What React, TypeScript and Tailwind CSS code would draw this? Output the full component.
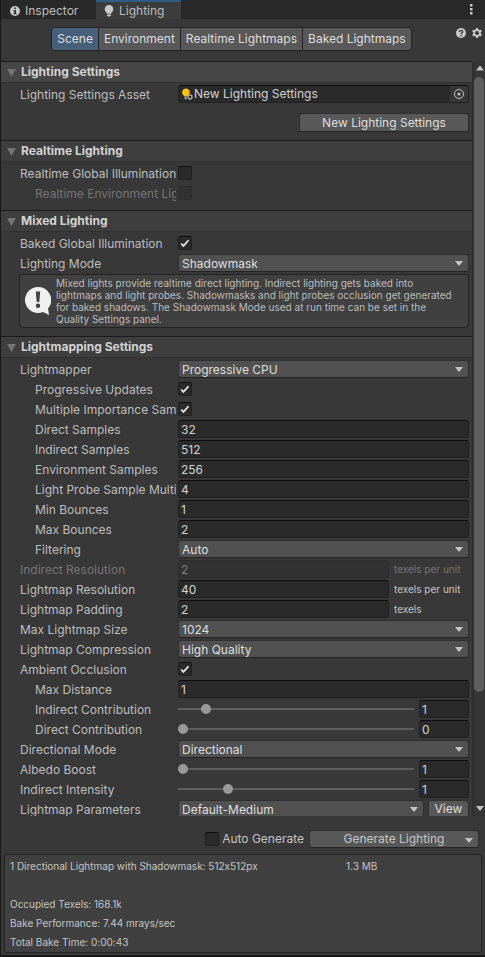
import { useState, type ReactNode } from "react";

const fieldClass =
  "h-[18px] min-w-0 rounded-[3px] border border-[#212121] border-t-[#0d0d0d] bg-[#2a2a2a] px-[2px] text-[12px] leading-[16px] text-[#d2d2d2] outline-none disabled:border-[#2d2d2d] disabled:bg-[#323232] disabled:text-[#7e7e7e]";

const buttonClass =
  "rounded-[3px] border border-[#303030] border-b-[#242424] bg-[#585858] text-[12px]";

const idOf = (label: string) => label.toLowerCase().replace(/\s+/g, "-");

function DownArrow({ className }: { className: string }) {
  return (
    <svg viewBox="0 0 8 5" className={className} aria-hidden="true">
      <path d="M0 0h8L4.500 4.500h-1z" fill="#c4c4c4" />
    </svg>
  );
}

function Section({ title, highlight, children }: { title: string; highlight?: boolean; children: ReactNode }) {
  return (
    <section className="pb-2">
      <h2
        className={`flex h-[22px] items-center border-t border-b border-t-[#1a1a1a] border-b-[#303030] pl-[6px] text-[12px] font-bold text-[#d2d2d2] ${
          highlight ? "bg-[#464646]" : "bg-[#3e3e3e]"
        }`}
      >
        <svg viewBox="0 0 9 8" className="mt-px mr-[5px] h-2 w-[9px]" aria-hidden="true">
          <path d="M0 0h9L4.500 8z" fill="#747474" />
        </svg>
        {title}
      </h2>
      <div className="flex flex-col gap-[2px] pt-[2px] pr-[3px]">{children}</div>
    </section>
  );
}

function Row({ label, indent, muted, children }: { label: string; indent?: boolean; muted?: boolean; children: ReactNode }) {
  return (
    <div className="flex h-[18px] items-center">
      <label
        htmlFor={idOf(label)}
        className={`mr-[2px] w-[175px] shrink-0 overflow-hidden pt-px leading-[17px] whitespace-nowrap ${indent ? "pl-[34px]" : "pl-[19px]"} ${
          muted ? "text-[#757575]" : "text-[#bdbdbd]"
        }`}
      >
        {label}
      </label>
      {children}
    </div>
  );
}

function CheckBox({ id, checked: initial = false, disabled }: { id: string; checked?: boolean; disabled?: boolean }) {
  const [checked, setChecked] = useState(initial);
  return (
    <span className="relative block size-[14px] shrink-0">
      <input
        id={id}
        type="checkbox"
        checked={checked}
        disabled={disabled}
        onChange={(e) => setChecked(e.target.checked)}
        className="block size-[14px] appearance-none rounded-[2px] border border-[#212121] border-t-[#0d0d0d] bg-[#2a2a2a] disabled:border-[#2c2c2c] disabled:bg-[#323232]"
      />
      {checked && (
        <svg viewBox="0 0 14 14" className="pointer-events-none absolute inset-0 size-[14px]" aria-hidden="true">
          <path d="M3.200 7.600l2.300 2.300 5-5.700" fill="none" stroke="#e8e8e8" strokeWidth="1.700" />
        </svg>
      )}
    </span>
  );
}

function CheckRow({ label, checked, disabled, indent }: { label: string; checked?: boolean; disabled?: boolean; indent?: boolean }) {
  return (
    <Row label={label} indent={indent} muted={disabled}>
      <CheckBox id={idOf(label)} checked={checked} disabled={disabled} />
    </Row>
  );
}

function Select({ id, value }: { id: string; value: string }) {
  return (
    <span className="relative flex min-w-0 flex-1">
      <select
        id={id}
        className="h-[18px] w-full appearance-none rounded-[3px] border border-[#303030] border-b-[#242424] bg-[#515151] px-[3px] text-[12px] leading-[15px] text-[#dedede] outline-none"
      >
        <option>{value}</option>
      </select>
      <DownArrow className="pointer-events-none absolute top-[7px] right-[6px] h-[5px] w-2" />
    </span>
  );
}

function SelectRow({ label, value, indent }: { label: string; value: string; indent?: boolean }) {
  return (
    <Row label={label} indent={indent}>
      <Select id={idOf(label)} value={value} />
    </Row>
  );
}

function NumberRow({ label, value, indent, disabled, unit }: { label: string; value: string; indent?: boolean; disabled?: boolean; unit?: string }) {
  return (
    <Row label={label} indent={indent} muted={disabled}>
      <input id={idOf(label)} type="text" defaultValue={value} disabled={disabled} className={`${fieldClass} flex-1`} />
      {unit && (
        <span className={`w-20 shrink-0 pl-[5px] text-[10px] whitespace-nowrap ${disabled ? "text-[#757575]" : "text-[#c4c4c4]"}`}>{unit}</span>
      )}
    </Row>
  );
}

function SliderRow({ label, value, min, max, indent }: { label: string; value: number; min: number; max: number; indent?: boolean }) {
  const [current, setCurrent] = useState(value);
  return (
    <Row label={label} indent={indent}>
      <input
        id={idOf(label)}
        type="range"
        min={min}
        max={max}
        step="any"
        value={current}
        onChange={(e) => setCurrent(Number(e.target.value))}
        className="mr-[5px] h-[18px] min-w-0 flex-1 appearance-none bg-transparent [&::-webkit-slider-runnable-track]:h-[2px] [&::-webkit-slider-runnable-track]:bg-[#5e5e5e] [&::-webkit-slider-thumb]:-mt-1 [&::-webkit-slider-thumb]:size-[10px] [&::-webkit-slider-thumb]:appearance-none [&::-webkit-slider-thumb]:rounded-full [&::-webkit-slider-thumb]:bg-[#999999]"
      />
      <input
        type="text"
        aria-label={`${label} value`}
        value={current}
        onChange={(e) => setCurrent(Number(e.target.value) || 0)}
        className={`${fieldClass} w-[50px]`}
      />
    </Row>
  );
}

function Bulb({ className }: { className: string }) {
  return (
    <svg viewBox="0 0 10 12" className={className} aria-hidden="true">
      <path d="M5 0a4.200 4.200 0 0 1 4.300 4.200c0 1.600-.9 2.500-1.700 3.400-.3.400-.4.700-.4 1.100H2.800c0-.4-.1-.7-.4-1.100C1.600 6.700.7 5.800.7 4.200A4.200 4.200 0 0 1 5 0z" fill="#c8c8c8" />
      <path d="M3 9.500h4v.8L6 11.600H4L3 10.300z" fill="#c8c8c8" />
    </svg>
  );
}

const views = ["Scene", "Environment", "Realtime Lightmaps", "Baked Lightmaps"];

export default function App() {
  const [view, setView] = useState("Scene");
  return (
    <div className="flex h-screen flex-col border-b-2 border-l border-b-[#191919] border-l-[#191919] bg-[#383838] font-['Inter','Liberation_Sans',sans-serif] text-[12px] text-[#c4c4c4] [font-feature-settings:'calt'_0]">
      <header className="flex h-[19px] shrink-0 bg-[#282828]">
        <div role="tablist" className="flex">
          <button role="tab" aria-selected={false} className="flex w-[95px] items-center gap-[5px] border-t-2 border-transparent pl-[9px] text-[#bdbdbd]">
            <svg viewBox="0 0 10 10" className="size-[10px]" aria-hidden="true">
              <circle cx="5" cy="5" r="5" fill="#c8c8c8" />
              <path d="M4.200 1.500h1.700v1.500H4.200zM3.500 4h2.400v3.200h.8v1H3.400v-1h.8V5h-.7z" fill="#282828" />
            </svg>
            Inspector
          </button>
          <button role="tab" aria-selected={true} className="flex w-[85px] items-center gap-[5px] border-t-2 border-[#2c5d87] bg-[#3c3c3c] pl-2 text-[#bdbdbd]">
            <Bulb className="h-3 w-[10px]" />
            Lighting
          </button>
        </div>
        <button aria-label="Window menu" className="mr-3 ml-auto">
          <svg viewBox="0 0 3 11" className="h-[11px] w-[3px]" aria-hidden="true">
            <path d="M0 0h2.500v2.500H0zM0 4h2.500v2.500H0zM0 8h2.500v2.500H0z" fill="#c8c8c8" />
          </svg>
        </button>
      </header>

      <nav className="flex h-[42px] shrink-0 items-start pt-2">
        <div className="flex flex-1 justify-center pl-[7px]">
          {views.map((name) => (
            <button
              key={name}
              aria-pressed={view === name}
              onClick={() => setView(name)}
              className={`-ml-px h-6 border border-[#242424] px-[5px] text-[12px] whitespace-nowrap text-[#dedede] first:rounded-l-[3px] last:rounded-r-[3px] ${
                view === name ? "bg-[#46607c]" : "bg-[#585858]"
              }`}
            >
              {name}
            </button>
          ))}
        </div>
        <div className="flex gap-[6px] pt-[1px] pr-[3px]">
          <button aria-label="Help">
            <svg viewBox="0 0 10 10" className="size-[10px]" aria-hidden="true">
              <circle cx="5" cy="5" r="5" fill="#c8c8c8" />
              <path d="M3.300 4c0-2.200 3.400-2.200 3.400-.2C6.700 5 5.100 4.900 5.100 6.200" fill="none" stroke="#383838" strokeWidth="1.300" />
              <path d="M4.400 7h1.400v1.300H4.400z" fill="#383838" />
            </svg>
          </button>
          <button aria-label="Settings">
            <svg viewBox="-5 -5 10 10" className="size-[10px]" aria-hidden="true">
              <circle r="2.900" fill="none" stroke="#c8c8c8" strokeWidth="1.900" />
              <path
                d="M-1-5h2v2h-2zM-1 3h2v2h-2zM3.800-3.400l1 1.800-1.700 1-1-1.800zM-3.800 3.400l-1-1.800 1.700-1 1 1.800zM4.800 1.600l-1 1.800-1.700-1 1-1.800zM-4.800-1.600l1-1.800 1.700 1-1 1.800z"
                fill="#c8c8c8"
              />
            </svg>
          </button>
        </div>
      </nav>

      <main className="flex min-h-0 flex-1">
        <div className="min-w-0 flex-1 overflow-y-auto [scrollbar-width:none]">
          <Section title="Lighting Settings" highlight>
            <Row label="Lighting Settings Asset">
              <div className="flex h-[18px] min-w-0 flex-1 items-center overflow-hidden rounded-[3px] border border-[#212121] border-t-[#0d0d0d] bg-[#2a2a2a] pl-[2px]">
                <svg viewBox="0 0 12 12" className="mr-px size-3 shrink-0" aria-hidden="true">
                  <path d="M5 .5a3.800 3.800 0 0 1 3.500 5.300L6.500 8.500h-3L1.800 6.500A3.800 3.800 0 0 1 5 .5z" fill="#ffc107" />
                  <path d="M3.200 9.300h2.300v2H4z" fill="#c4c4c4" />
                  <circle cx="9" cy="9" r="2" fill="none" stroke="#a8a8a8" strokeWidth="1.300" />
                </svg>
                <input
                  id="lighting-settings-asset"
                  type="text"
                  readOnly
                  value="New Lighting Settings"
                  className="h-4 min-w-0 flex-1 bg-transparent text-[12px] leading-4 text-[#d2d2d2] outline-none"
                />
                <button aria-label="Select asset" className="flex h-4 w-[18px] shrink-0 items-center justify-center bg-[#373737]">
                  <svg viewBox="0 0 10 10" className="size-[10px]" aria-hidden="true">
                    <circle cx="5" cy="5" r="4.500" fill="none" stroke="#c4c4c4" strokeWidth="1" />
                    <circle cx="5" cy="5" r="1.500" fill="#c4c4c4" />
                  </svg>
                </button>
              </div>
            </Row>
            <button className={`${buttonClass} mt-2 h-[19px] w-[170px] self-end leading-[17px] text-[#dedede]`}>New Lighting Settings</button>
          </Section>

          <Section title="Realtime Lighting">
            <CheckRow label="Realtime Global Illumination" />
            <CheckRow label="Realtime Environment Lighting" indent disabled />
          </Section>

          <Section title="Mixed Lighting">
            <CheckRow label="Baked Global Illumination" checked />
            <SelectRow label="Lighting Mode" value="Shadowmask" />
            <div className="ml-[18px] flex min-h-[54px] items-center rounded-[3px] border border-[#232323] bg-[#404040] pr-2 pl-[5px]">
              <svg viewBox="0 0 26 28" className="h-7 w-[26px] shrink-0" aria-hidden="true">
                <path d="M13 0a13 13 0 1 0 5 25l6 3-1-6.500A13 13 0 0 0 13 0z" fill="#f0f0f0" />
                <path d="M10.800 4.500h4.400l-.9 10.500h-2.600z" fill="#404040" />
                <circle cx="13" cy="18.800" r="2.200" fill="#404040" />
              </svg>
              <p className="min-w-0 flex-1 pl-[5px] text-[10px] leading-[12px] text-[#bdbdbd]">
                Mixed lights provide realtime direct lighting. Indirect lighting gets baked into lightmaps and light probes. Shadowmasks and light probes
                occlusion get generated for baked shadows. The Shadowmask Mode used at run time can be set in the Quality Settings panel.
              </p>
            </div>
          </Section>

          <Section title="Lightmapping Settings">
            <SelectRow label="Lightmapper" value="Progressive CPU" />
            <CheckRow label="Progressive Updates" checked indent />
            <CheckRow label="Multiple Importance Sampling" checked indent />
            <NumberRow label="Direct Samples" value="32" indent />
            <NumberRow label="Indirect Samples" value="512" indent />
            <NumberRow label="Environment Samples" value="256" indent />
            <NumberRow label="Light Probe Sample Multiplier" value="4" indent />
            <NumberRow label="Min Bounces" value="1" indent />
            <NumberRow label="Max Bounces" value="2" indent />
            <SelectRow label="Filtering" value="Auto" indent />
            <NumberRow label="Indirect Resolution" value="2" unit="texels per unit" disabled />
            <NumberRow label="Lightmap Resolution" value="40" unit="texels per unit" />
            <NumberRow label="Lightmap Padding" value="2" unit="texels" />
            <SelectRow label="Max Lightmap Size" value="1024" />
            <SelectRow label="Lightmap Compression" value="High Quality" />
            <CheckRow label="Ambient Occlusion" checked />
            <NumberRow label="Max Distance" value="1" indent />
            <SliderRow label="Indirect Contribution" value={1} min={0} max={10} indent />
            <SliderRow label="Direct Contribution" value={0} min={0} max={10} indent />
            <SelectRow label="Directional Mode" value="Directional" />
            <SliderRow label="Albedo Boost" value={1} min={1} max={10} />
            <SliderRow label="Indirect Intensity" value={1} min={0} max={5} />
            <Row label="Lightmap Parameters">
              <Select id="lightmap-parameters" value="Default-Medium" />
              <button className={`${buttonClass} ml-1 h-[18px] w-[41px] leading-[16px] text-[#dedede]`}>View</button>
            </Row>
          </Section>
        </div>

        <div className="flex w-[13px] shrink-0 flex-col items-center border-l-2 border-[#303030] bg-[#353535]" aria-hidden="true">
          <svg viewBox="0 0 8 5" className="mt-[5px] mb-[6px] h-[5px] w-2 shrink-0">
            <path d="M0 4.500h8L4.500 0h-1z" fill="#c4c4c4" />
          </svg>
          <div className="min-h-0 w-full flex-1 pr-px">
            <div className="h-[85%] rounded-full bg-[#5f5f5f]" />
          </div>
          <DownArrow className="mt-[6px] mb-[5px] h-[5px] w-2 shrink-0" />
        </div>
      </main>

      <footer className="shrink-0 px-[3px] pt-[14px] pb-[2px]">
        <div className="mr-[3px] flex h-[18px] items-center justify-end">
          <CheckBox id="auto-generate" />
          <label htmlFor="auto-generate" className="mr-[5px] ml-[3px] whitespace-nowrap">
            Auto Generate
          </label>
          <button className={`${buttonClass} relative h-[18px] w-[170px] leading-[16px] text-[#c4c4c4]`}>
            Generate Lighting
            <DownArrow className="absolute top-[7px] right-[5px] h-[5px] w-2" />
          </button>
        </div>
        <div className="mt-[6px] rounded-[3px] border border-[#232323] bg-[#404040] pt-[2px] pl-[5px] text-[10px] leading-[19px]">
          <div className="flex">
            <span className="w-[336px]">1 Directional Lightmap with Shadowmask: 512x512px</span>
            <span>1.3 MB</span>
          </div>
          <p className="mt-[19px]">Occupied Texels: 168.1k</p>
          <p>Bake Performance: 7.44 mrays/sec</p>
          <p>Total Bake Time: 0:00:43</p>
        </div>
      </footer>
    </div>
  );
}
